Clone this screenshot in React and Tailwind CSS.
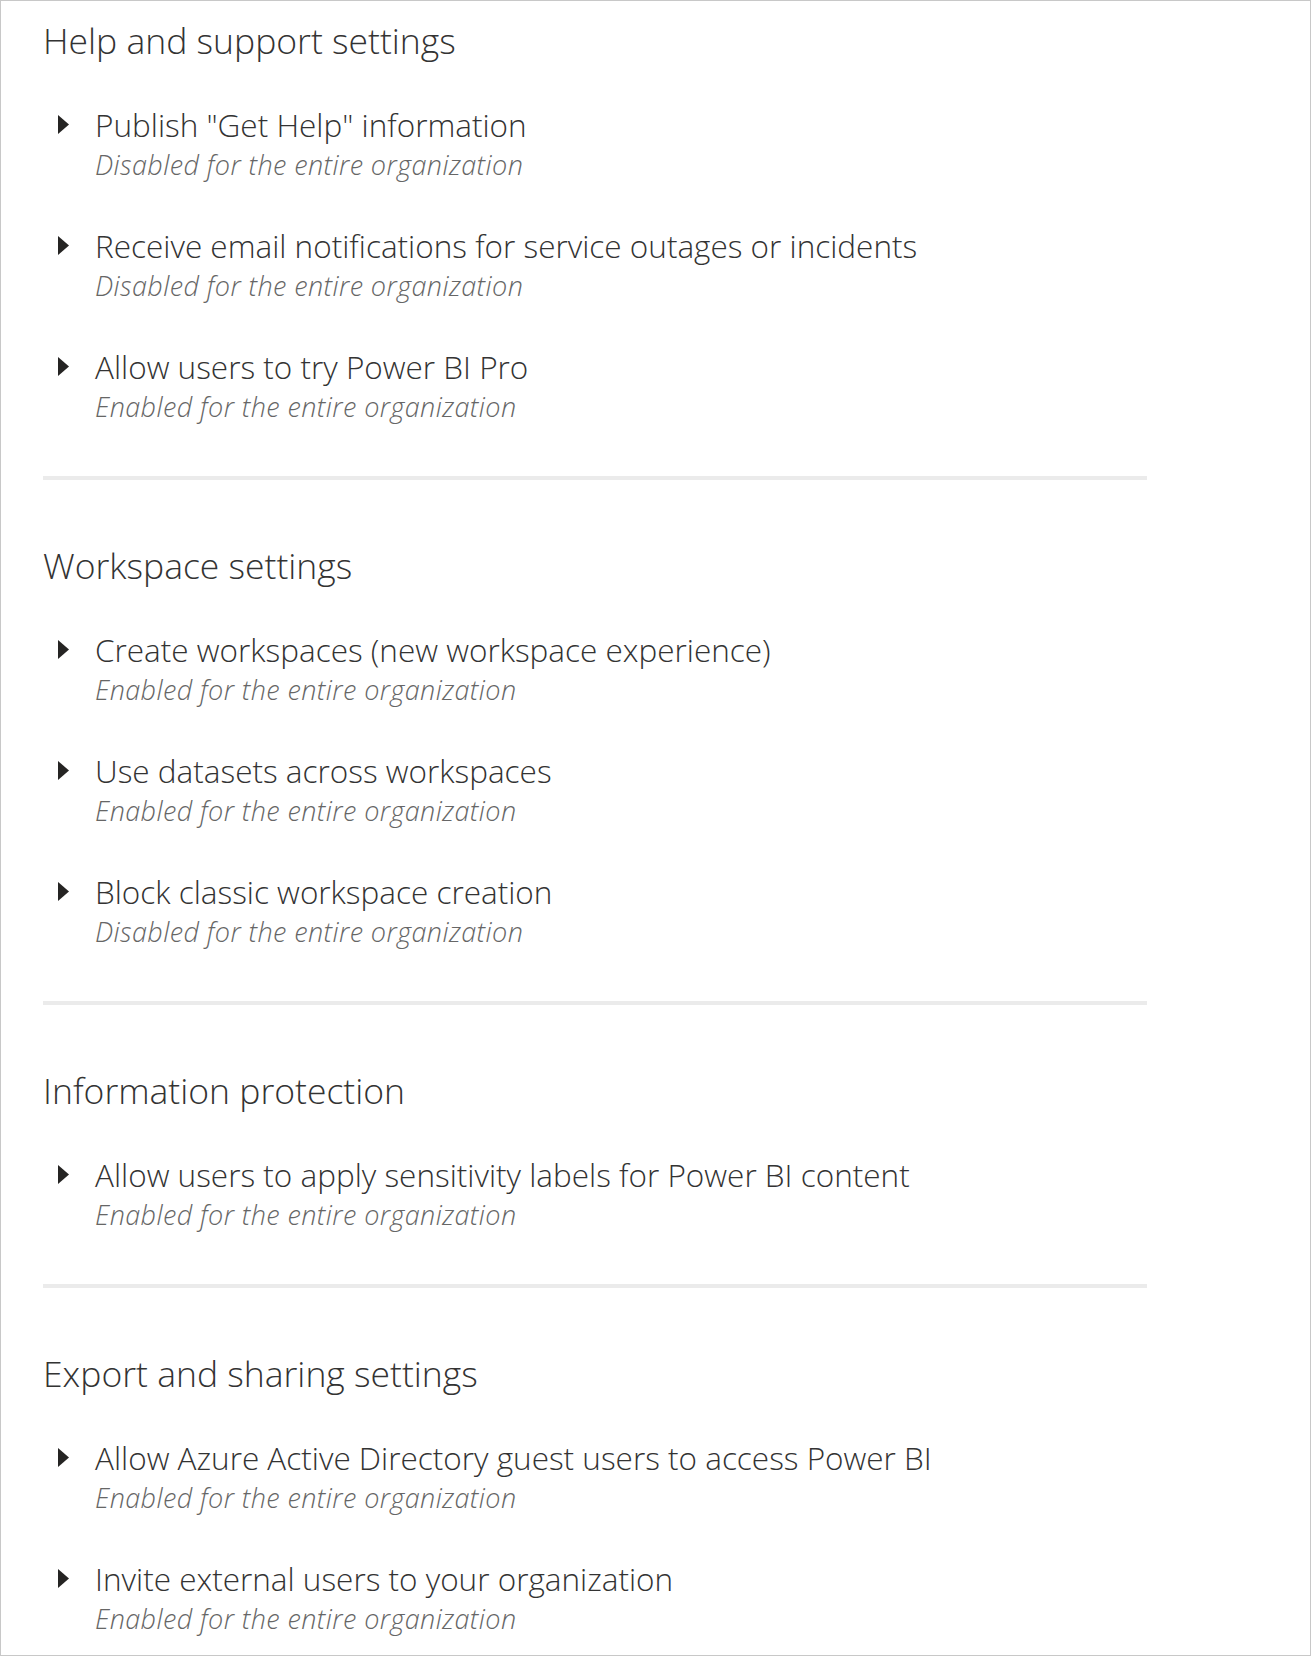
const sections = [
  {
    title: 'Help and support settings',
    items: [
      { name: 'Publish "Get Help" information', status: 'Disabled for the entire organization' },
      { name: 'Receive email notifications for service outages or incidents', status: 'Disabled for the entire organization' },
      { name: 'Allow users to try Power BI Pro', status: 'Enabled for the entire organization' },
    ],
  },
  {
    title: 'Workspace settings',
    items: [
      { name: 'Create workspaces (new workspace experience)', status: 'Enabled for the entire organization' },
      { name: 'Use datasets across workspaces', status: 'Enabled for the entire organization' },
      { name: 'Block classic workspace creation', status: 'Disabled for the entire organization' },
    ],
  },
  {
    title: 'Information protection',
    items: [
      { name: 'Allow users to apply sensitivity labels for Power BI content', status: 'Enabled for the entire organization' },
    ],
  },
  {
    title: 'Export and sharing settings',
    items: [
      { name: 'Allow Azure Active Directory guest users to access Power BI', status: 'Enabled for the entire organization' },
      { name: 'Invite external users to your organization', status: 'Enabled for the entire organization' },
    ],
  },
];

function Caret() {
  return (
    <svg width="11" height="19" viewBox="0 0 11 19" className="shrink-0">
      <path d="M0 0 L11 9.5 L0 19 Z" fill="#252423" />
    </svg>
  );
}

function SettingItem({ name, status, first }) {
  return (
    <div className={first ? 'flex mt-[43px]' : 'flex mt-[41px]'}>
      <div className="w-[52px] pl-[15px] pt-[10px] shrink-0">
        <Caret />
      </div>
      <div>
        <div className="text-[31.5px] leading-[40px] text-[#333333] font-light whitespace-nowrap">{name}</div>
        <div className="text-[27px] leading-[40px] tracking-[0.4px] text-[#666666] italic font-light whitespace-nowrap">
          {status}
        </div>
      </div>
    </div>
  );
}

export default function App() {
  return (
    <div
      className="w-[1311px] h-[1656px] bg-white border border-[#c8c8c8] overflow-hidden"
      style={{ fontFamily: '"Open Sans", "Noto Sans", sans-serif' }}
    >
      <div className="pl-[42px] pt-[17px] w-[1146px]">
        {sections.map((section, i) => (
          <div key={section.title}>
            {i > 0 && <div className="h-[4px] bg-[#ebebeb] mt-[49px] mb-[63px]" />}
            <h2 className="text-[35.5px] leading-[44px] text-[#333333] font-light whitespace-nowrap">{section.title}</h2>
            {section.items.map((item, j) => (
              <SettingItem key={item.name} first={j === 0} {...item} />
            ))}
          </div>
        ))}
      </div>
    </div>
  );
}
